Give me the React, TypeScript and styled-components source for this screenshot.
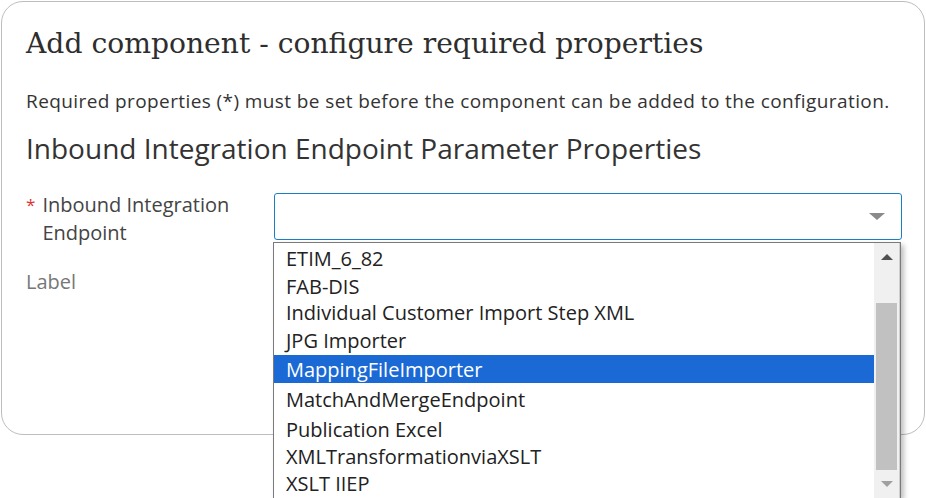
import React from "react";
import styled, { createGlobalStyle } from "styled-components";

const Global = createGlobalStyle`
  html, body { margin: 0; padding: 0; background: #ffffff; }
  body { width: 926px; height: 498px; overflow: hidden; font-family: "Open Sans", "Noto Sans", sans-serif; }
`;

const Page = styled.div`
  position: relative;
  width: 926px;
  height: 498px;
  padding: 1px 1px 0 1px;
  box-sizing: border-box;
`;

const Modal = styled.div`
  position: relative;
  height: 434px;
  border: 1px solid #bdbdbd;
  border-radius: 22px;
  background: #fff;
  box-sizing: border-box;
  padding: 22px 0 0 24px;
  display: flex;
  flex-direction: column;
`;

const Title = styled.h1`
  margin: 0;
  font-family: "DejaVu Serif", "Liberation Serif", serif;
  font-weight: 400;
  font-size: 28.2px;
  line-height: 40px;
  color: #2e2e2e;
`;

const Description = styled.p`
  margin: 24px 0 0 0;
  font-size: 19px;
  letter-spacing: 0.4px;
  line-height: 26px;
  color: #333;
`;

const SectionTitle = styled.h2`
  margin: 16px 0 0 0;
  font-weight: 400;
  font-size: 28px;
  line-height: 36px;
  color: #333;
`;

const Form = styled.div`
  margin-top: 25px;
  display: grid;
  grid-template-columns: 248px 628px;
  row-gap: 21px;
`;

const FieldLabel = styled.div<{ $muted?: boolean }>`
  display: flex;
  gap: 7px;
  font-size: 20px;
  line-height: 28px;
  color: ${(p) => (p.$muted ? "#777" : "#444")};
`;

const Star = styled.span`
  color: #d33;
  font-size: 17px;
`;

const SelectBox = styled.div`
  position: relative;
  height: 47px;
  margin-top: 2px;
  border: 1px solid #1a80c4;
  border-radius: 3px;
  box-sizing: border-box;
  display: flex;
  align-items: center;
  justify-content: flex-end;
  padding-right: 16px;
`;

const Caret = styled.div`
  width: 0;
  height: 0;
  border-left: 8px solid transparent;
  border-right: 8px solid transparent;
  border-top: 7px solid #8a8a8a;
`;

const Dropdown = styled.div`
  position: absolute;
  left: 273px;
  top: 242px;
  width: 628px;
  height: 256px;
  background: #fff;
  border: 1px solid #7a7a7a;
  border-bottom: none;
  box-sizing: border-box;
  box-shadow: 3px 3px 5px rgba(0, 0, 0, 0.25);
  display: flex;
`;

const OptionList = styled.div`
  flex: 1;
  display: flex;
  flex-direction: column;
`;

const Option = styled.div<{ $selected?: boolean; $h: number }>`
  height: ${(p) => p.$h}px;
  display: flex;
  align-items: center;
  padding-left: 12px;
  font-size: 20px;
  color: ${(p) => (p.$selected ? "#fff" : "#222")};
  background: ${(p) => (p.$selected ? "#1a69d4" : "transparent")};
  white-space: nowrap;
`;

const Scrollbar = styled.div`
  width: 25px;
  background: #f0f0f0;
  display: flex;
  flex-direction: column;
  align-items: center;
  border-right: 1px solid #d0d0d0;
`;

const ArrowBtn = styled.div`
  height: 28px;
  width: 100%;
  display: flex;
  align-items: center;
  justify-content: center;
`;

const ArrowUp = styled.div`
  width: 0;
  height: 0;
  border-left: 6px solid transparent;
  border-right: 6px solid transparent;
  border-bottom: 6px solid #505050;
`;

const ArrowDown = styled.div`
  width: 0;
  height: 0;
  border-left: 6px solid transparent;
  border-right: 6px solid transparent;
  border-top: 6px solid #a0a0a0;
`;

const Track = styled.div`
  flex: 1;
  width: 100%;
  padding: 32px 2px 0 2px;
  box-sizing: border-box;
  display: flex;
`;

const Thumb = styled.div`
  flex: 1;
  background: #c1c1c1;
`;

const options: { label: string; h: number; selected?: boolean }[] = [
  { label: "ETIM_6_82", h: 30 },
  { label: "FAB-DIS", h: 26 },
  { label: "Individual Customer Import Step XML", h: 27 },
  { label: "JPG Importer", h: 29 },
  { label: "MappingFileImporter", h: 28, selected: true },
  { label: "MatchAndMergeEndpoint", h: 32 },
  { label: "Publication Excel", h: 29 },
  { label: "XMLTransformationviaXSLT", h: 25 },
  { label: "XSLT IIEP", h: 28 },
];

export default function App() {
  return (
    <>
      <Global />
      <Page>
        <Modal>
          <Title>Add component - configure required properties</Title>
          <Description>
            Required properties (*) must be set before the component can be added to the configuration.
          </Description>
          <SectionTitle>Inbound Integration Endpoint Parameter Properties</SectionTitle>
          <Form>
            <FieldLabel>
              <Star>*</Star>
              <span>
                Inbound Integration
                <br />
                Endpoint
              </span>
            </FieldLabel>
            <SelectBox>
              <Caret />
            </SelectBox>
            <FieldLabel $muted>Label</FieldLabel>
            <div />
          </Form>
        </Modal>
        <Dropdown>
          <OptionList>
            {options.map((o) => (
              <Option key={o.label} $h={o.h} $selected={o.selected}>
                {o.label}
              </Option>
            ))}
          </OptionList>
          <Scrollbar>
            <ArrowBtn>
              <ArrowUp />
            </ArrowBtn>
            <Track>
              <Thumb />
            </Track>
            <ArrowBtn>
              <ArrowDown />
            </ArrowBtn>
          </Scrollbar>
        </Dropdown>
      </Page>
    </>
  );
}
